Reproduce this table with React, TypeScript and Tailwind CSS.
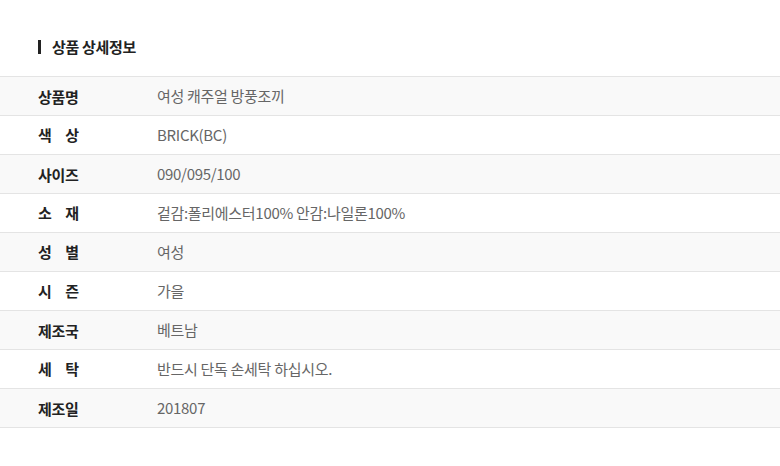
import React from "react";

const rows: { label: string; spread?: boolean; value: string }[] = [
  { label: "상품명", value: "여성 캐주얼 방풍조끼" },
  { label: "색상", spread: true, value: "BRICK(BC)" },
  { label: "사이즈", value: "090/095/100" },
  { label: "소재", spread: true, value: "겉감:폴리에스터100% 안감:나일론100%" },
  { label: "성별", spread: true, value: "여성" },
  { label: "시즌", spread: true, value: "가을" },
  { label: "제조국", value: "베트남" },
  { label: "세탁", spread: true, value: "반드시 단독 손세탁 하십시오." },
  { label: "제조일", value: "201807" },
];

export default function App() {
  return (
    <div
      className="w-[780px] h-[466px] bg-white overflow-hidden"
      style={{ fontFamily: '"Noto Sans CJK KR", "Noto Sans", sans-serif' }}
    >
      <div className="flex items-center h-[20px] mt-[37px] mb-[19px] pl-[38px]">
        <span className="w-[3px] h-[14px] bg-[#222]" />
        <span className="ml-[11px] text-[15px] font-bold text-[#222] tracking-[-0.3px] leading-[20px]">상품 상세정보</span>
      </div>
      <div className="border-t border-[#e4e4e4]">
        {rows.map((r, i) => (
          <div
            key={r.label}
            className={`flex items-center h-[39px] border-b border-[#e4e4e4] ${i % 2 === 0 ? "bg-[#f9f9f9]" : "bg-white"}`}
          >
            <div className="w-[157px] pl-[38px] shrink-0 leading-[20px]">
              {r.spread ? (
                <div className="w-[41px] flex justify-between text-[15px] font-bold text-[#222]">
                  <span>{r.label[0]}</span>
                  <span>{r.label[1]}</span>
                </div>
              ) : (
                <span className="text-[15px] font-bold text-[#222] tracking-[-0.3px]">{r.label}</span>
              )}
            </div>
            <div className="text-[15px] text-[#666] tracking-[-0.3px] leading-[20px]">{r.value}</div>
          </div>
        ))}
      </div>
    </div>
  );
}
